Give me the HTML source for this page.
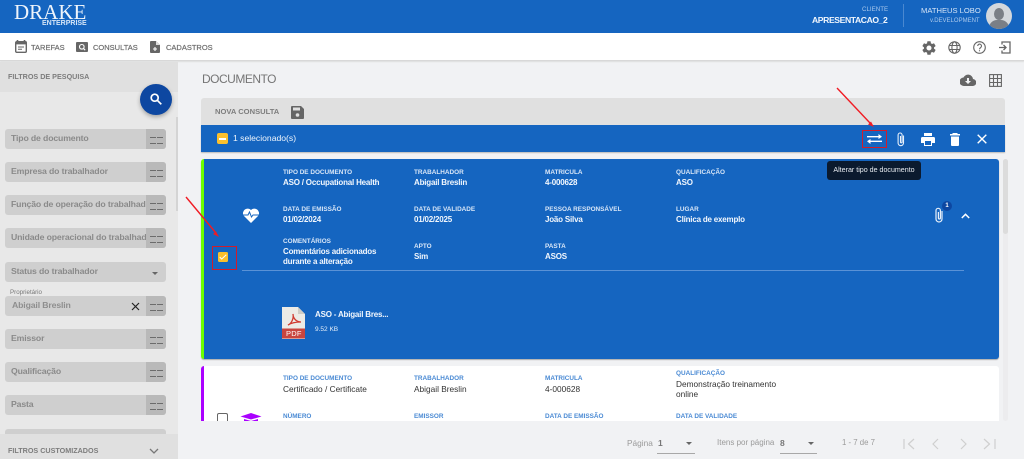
<!DOCTYPE html>
<html lang="pt"><head><meta charset="utf-8"><title>Documento</title>
<style>
*{box-sizing:border-box}
html{background:#f1f2f4}
html,body{margin:0;padding:0;width:1024px;height:459px;overflow:hidden;font-family:"Liberation Sans",sans-serif}
body{background:#f1f2f4;filter:blur(.35px)}
.a{position:absolute}
.t{position:absolute;white-space:nowrap;line-height:1}
svg{position:absolute;display:block}
.fld{position:absolute;left:5px;width:161px;height:20px;background:#cfcfcf;border-radius:3px;overflow:hidden}
.fld span{position:absolute;left:6px;top:4px;font-size:8.7px;font-weight:bold;color:#8a8a8a;white-space:nowrap;line-height:11px;letter-spacing:-.14px}
.fld i{position:absolute;right:0;top:0;width:20px;height:20px;background:#b9b9b9}
.fld i:before,.fld i:after{content:"";position:absolute;top:8px;width:5.5px;height:4.5px;border-top:1.5px solid #6c6c6c;border-bottom:1.5px solid #6c6c6c}
.fld i:before{left:4px}.fld i:after{left:11px}
.l{position:absolute;font-size:6.4px;font-weight:bold;color:#d8e6f7;white-space:nowrap;line-height:8px}
.v{position:absolute;font-size:8px;font-weight:bold;letter-spacing:-.2px;color:#f2f7fd;white-space:nowrap;line-height:10px}
.l2{position:absolute;font-size:6.4px;font-weight:bold;color:#4a8ad4;white-space:nowrap;line-height:8px}
.v2{position:absolute;font-size:8.3px;color:#333;white-space:nowrap;line-height:10px}
.nav{position:absolute;font-size:7.5px;color:#6e6e6e;white-space:nowrap;line-height:10px;top:43px;-webkit-text-stroke:.2px #6e6e6e}
</style></head><body>

<!-- header -->
<div class="a" style="left:0;top:0;width:1024px;height:33px;background:#1565c0"></div>
<div class="t" style="left:14px;top:1.5px;font-family:'Liberation Serif',serif;font-size:21px;color:#eef4fb;line-height:20px">DRAKE</div>
<div class="t" style="left:42px;top:20px;font-size:7px;font-weight:bold;color:#d5e5f7;line-height:8px">ENTERPRISE</div>
<div class="t" style="left:862px;top:6px;font-size:6.2px;color:#a9c8ec;line-height:8px">CLIENTE</div>
<div class="t" style="left:812px;top:15px;font-size:8.6px;font-weight:bold;letter-spacing:-.4px;color:#f0f6fd;line-height:10px">APRESENTACAO_2</div>
<div class="a" style="left:903px;top:4px;width:1px;height:23px;background:#4a88d0"></div>
<div class="t" style="left:921px;top:6px;font-size:7.6px;color:#d5e4f6;line-height:10px">MATHEUS LOBO</div>
<div class="t" style="left:930px;top:17px;font-size:6px;color:#a9c8ec;line-height:8px">v.DEVELOPMENT</div>
<div class="a" style="left:986px;top:3px;width:26px;height:26px;border-radius:50%;background:#d4d8dc;overflow:hidden">
 <div class="a" style="left:8px;top:5px;width:10px;height:12px;border-radius:50%;background:#7a7f86"></div>
 <div class="a" style="left:3px;top:17px;width:20px;height:12px;border-radius:8px 8px 0 0;background:#7a7f86"></div>
</div>

<!-- toolbar -->
<div class="a" style="left:0;top:33px;width:1024px;height:28px;background:#fff;border-bottom:1px solid #d8d8d8;box-shadow:0 1px 1px #ddd"></div>
<svg style="left:15px;top:40px" width="12" height="13" viewBox="0 0 12 13"><path d="M2.5 0v2M9.5 0v2" stroke="#666" stroke-width="1.6"/><rect x=".7" y="1.7" width="10.6" height="10.6" rx="1" fill="none" stroke="#666" stroke-width="1.4"/><path d="M1 2h10v2.4H1zM3 6.5h6v1H3zM3 8.8h4v1H3z" fill="#666"/></svg>
<div class="nav" style="left:31px">TAREFAS</div>
<svg style="left:76px;top:42px" width="12" height="10" viewBox="0 0 12 10"><rect width="12" height="10" rx="1" fill="#666"/><circle cx="5.8" cy="4.8" r="2.3" fill="none" stroke="#fff" stroke-width="1.1"/><path d="M7.4 6.4l1.8 1.8" stroke="#fff" stroke-width="1.1"/></svg>
<div class="nav" style="left:93px">CONSULTAS</div>
<svg style="left:150px;top:41px" width="10" height="12" viewBox="0 0 10 12"><path d="M1 0h5l4 4v7a1 1 0 0 1-1 1H1a1 1 0 0 1-1-1V1a1 1 0 0 1 1-1z" fill="#666"/><path d="M6 0v4h4" fill="#ddd"/><path d="M5 6v4M3 8h4" stroke="#fff" stroke-width="1.1"/></svg>
<div class="nav" style="left:166px">CADASTROS</div>

<svg style="left:922px;top:41px" width="14" height="14" viewBox="2 2 20 20"><path fill="#666" d="M19.14 12.94c.04-.3.06-.61.06-.94s-.02-.64-.07-.94l2.03-1.58a.49.49 0 0 0 .12-.61l-1.92-3.32a.49.49 0 0 0-.59-.22l-2.39.96c-.5-.38-1.03-.7-1.62-.94l-.36-2.54a.48.48 0 0 0-.48-.41h-3.84c-.24 0-.43.17-.47.41l-.36 2.54c-.59.24-1.13.57-1.62.94l-2.39-.96a.48.48 0 0 0-.59.22L2.74 8.87c-.12.21-.08.47.12.61l2.03 1.58c-.05.3-.09.63-.09.94s.02.64.07.94l-2.03 1.58a.49.49 0 0 0-.12.61l1.92 3.32c.12.22.37.29.59.22l2.39-.96c.5.38 1.03.7 1.62.94l.36 2.54c.05.24.24.41.48.41h3.84c.24 0 .44-.17.47-.41l.36-2.54c.59-.24 1.13-.56 1.62-.94l2.39.96c.22.08.47 0 .59-.22l1.92-3.32c.12-.22.07-.47-.12-.61l-2.01-1.58zM12 15.6A3.6 3.6 0 1 1 12 8.4a3.6 3.6 0 0 1 0 7.2z"/></svg>
<svg style="left:948px;top:41px" width="13" height="13" viewBox="0 0 13 13" fill="none" stroke="#666" stroke-width="1.1"><circle cx="6.5" cy="6.5" r="5.7"/><ellipse cx="6.5" cy="6.5" rx="2.6" ry="5.7"/><path d="M1 4.5h11M1 8.5h11"/></svg>
<svg style="left:973px;top:41px" width="13" height="13" viewBox="0 0 13 13" fill="none" stroke="#666" stroke-width="1.1"><circle cx="6.5" cy="6.5" r="5.8"/><path d="M4.7 5a1.9 1.9 0 1 1 2.9 1.6c-.8.5-1.1.9-1.1 1.7M6.5 9.2v1.1"/></svg>
<svg style="left:999px;top:41px" width="12" height="13" viewBox="0 0 12 13" fill="none" stroke="#666" stroke-width="1.3"><path d="M3 3.5V1h8v11H3V9.5"/><path d="M0 6.5h6.500M4.500 4l2.500 2.500L4.500 9"/></svg>

<!-- sidebar -->
<div class="a" style="left:0;top:62px;width:178px;height:397px;background:#e8e8e8;overflow:hidden">
 <div class="a" style="left:0;top:0;width:178px;height:30px;background:#e0e0e0"></div>
 <div class="t" style="left:8px;top:10px;font-size:7.2px;font-weight:bold;color:#7d7d7d;line-height:9px">FILTROS DE PESQUISA</div>
 <div class="a" style="left:176px;top:55px;width:2px;height:94px;background:#d4d4d4"></div>
</div>
<div class="fld" style="top:129px"><span>Tipo de documento</span><i></i></div>
<div class="fld" style="top:162px"><span>Empresa do trabalhador</span><i></i></div>
<div class="fld" style="top:195px"><span>Função de operação do trabalhador</span><i></i></div>
<div class="fld" style="top:228px"><span>Unidade operacional do trabalhador</span><i></i></div>
<div class="fld" style="top:262px"><span>Status do trabalhador</span><b class="a" style="left:147px;top:10px;border:3px solid transparent;border-top:3px solid #666;border-bottom:0;width:0"></b></div>
<div class="t" style="left:10px;top:289px;font-size:6.2px;color:#777;line-height:8px">Proprietário</div>
<div class="fld" style="top:296px"><span style="left:7px;color:#8e8e8e">Abigail Breslin</span><i></i></div>
<svg style="left:131px;top:302px" width="9" height="9" viewBox="0 0 9 9"><path d="M1 1l7 7M8 1L1 8" stroke="#222" stroke-width="1.2"/></svg>
<div class="fld" style="top:329px"><span>Emissor</span><i></i></div>
<div class="fld" style="top:362px"><span>Qualificação</span><i></i></div>
<div class="fld" style="top:395px"><span>Pasta</span><i></i></div>
<div class="fld" style="top:429px"></div>
<div class="a" style="left:0;top:434px;width:178px;height:25px;background:#e0e0e0"></div>
<div class="t" style="left:8px;top:446px;font-size:7.2px;font-weight:bold;color:#7d7d7d;line-height:9px">FILTROS CUSTOMIZADOS</div>
<svg style="left:149px;top:448px" width="10" height="7" viewBox="0 0 10 7"><path d="M1 1l4 4 4-4" fill="none" stroke="#777" stroke-width="1.3"/></svg>
<div class="a" style="left:140px;top:84px;width:32px;height:31px;border-radius:50%;background:#0d47a1;box-shadow:0 2px 4px rgba(0,0,0,.3)"></div>
<svg style="left:150px;top:93px" width="12" height="12" viewBox="0 0 12 12" fill="none" stroke="#fff" stroke-width="1.7"><circle cx="4.7" cy="4.7" r="3.5"/><path d="M7.3 7.3l4 4"/></svg>

<!-- main -->
<div class="t" style="left:202px;top:72px;font-size:12px;letter-spacing:-.5px;color:#757575;line-height:14px">DOCUMENTO</div>
<svg style="left:960px;top:74px" width="16" height="13" viewBox="0 0 16 13"><path fill="#666" d="M13 5a5 5 0 0 0-9.5-1.500A4 4 0 0 0 4 12h8.500a3.300 3.300 0 0 0 .5-7z"/><path fill="#f1f2f4" d="M7 4h2v3h2L8 10 5 7h2z"/></svg>
<svg style="left:989px;top:74px" width="13" height="13" viewBox="0 0 13 13" fill="none" stroke="#666" stroke-width="1.1"><rect x=".6" y=".6" width="11.8" height="11.8"/><path d="M4.5 .6v11.8M8.5 .6v11.8M.6 4.5h11.8M.6 8.5h11.8"/></svg>

<div class="a" style="left:201px;top:98px;width:804px;height:27px;background:#e0e0e0;border-radius:3px 3px 0 0"></div>
<div class="t" style="left:215px;top:107px;font-size:7.6px;font-weight:bold;color:#7d7d7d;line-height:9px">NOVA CONSULTA</div>
<svg style="left:291px;top:106px" width="13" height="13" viewBox="0 0 13 13"><path fill="#666" d="M1 0h9l3 3v9a1 1 0 0 1-1 1H1a1 1 0 0 1-1-1V1a1 1 0 0 1 1-1z"/><rect x="2" y="1.5" width="7" height="3" fill="#e0e0e0"/><circle cx="6.5" cy="9" r="1.8" fill="#e0e0e0"/></svg>

<div class="a" style="left:201px;top:125px;width:804px;height:27px;background:#1565c0;box-shadow:0 1px 1px #bbb"></div>
<div class="a" style="left:217px;top:133px;width:11px;height:11px;background:#fbc02d;border-radius:2px"></div>
<div class="a" style="left:219px;top:138px;width:7px;height:1.5px;background:#fff"></div>
<div class="t" style="left:233px;top:133px;font-size:8.6px;color:#f0f6fd;line-height:10px">1 selecionado(s)</div>
<div class="a" style="left:862px;top:130px;width:25px;height:18px;border:1.5px solid #d01c2c"></div>
<svg style="left:867px;top:134px" width="15" height="10" viewBox="0 0 15 10" fill="#fff"><path d="M0 2h11.5V0L15 2.7 11.5 5V3.4H0zM15 6.6H3.5V5L0 7.3 3.5 10V8H15z"/></svg>
<svg style="left:896px;top:132px" width="10" height="15" viewBox="0 0 10 15" fill="none" stroke="#e8f0fa" stroke-width="1.1"><path d="M7.5 3.5v7.500a2.700 2.700 0 0 1-5.400 0V3a2 2 0 0 1 4 0v7a.8.8 0 0 1-1.600 0V4"/></svg>
<svg style="left:921px;top:133px" width="14" height="13" viewBox="0 0 14 13" fill="#fff"><path d="M3 0h8v3H3zM1.500 4h11A1.500 1.500 0 0 1 14 5.500V10h-3v3H3v-3H0V5.500A1.500 1.500 0 0 1 1.500 4z"/><rect x="4" y="8" width="6" height="4" fill="#1565c0"/></svg>
<svg style="left:950px;top:133px" width="10" height="13" viewBox="0 0 10 13" fill="#fff"><path d="M3 0h4l1 1h2v1.500H0V1h2zM1 3.500h8V12a1 1 0 0 1-1 1H2a1 1 0 0 1-1-1z"/></svg>
<svg style="left:977px;top:134px" width="10" height="10" viewBox="0 0 10 10"><path d="M.7.7l8.600 8.600M9.300.7L.7 9.300" stroke="#fff" stroke-width="1.4"/></svg>

<!-- scrollbar -->
<div class="a" style="left:1003px;top:159px;width:5px;height:262px;background:#ececee;border-radius:3px"></div>
<div class="a" style="left:1003px;top:159px;width:5px;height:75px;background:#dcdcdc;border-radius:3px"></div>

<!-- card 1 -->
<div class="a" style="left:201px;top:159px;width:798px;height:200px;background:#1565c0;border-left:3px solid #6bff00;border-radius:3px;box-shadow:0 1px 1px #aaa"></div>
<div class="l" style="left:283px;top:169px">TIPO DE DOCUMENTO</div><div class="v" style="left:283px;top:178px">ASO / Occupational Health</div>
<div class="l" style="left:414px;top:169px">TRABALHADOR</div><div class="v" style="left:414px;top:178px">Abigail Breslin</div>
<div class="l" style="left:545px;top:169px">MATRICULA</div><div class="v" style="left:545px;top:178px">4-000628</div>
<div class="l" style="left:676px;top:169px">QUALIFICAÇÃO</div><div class="v" style="left:676px;top:178px">ASO</div>
<div class="l" style="left:283px;top:206px">DATA DE EMISSÃO</div><div class="v" style="left:283px;top:215px">01/02/2024</div>
<div class="l" style="left:414px;top:206px">DATA DE VALIDADE</div><div class="v" style="left:414px;top:215px">01/02/2025</div>
<div class="l" style="left:545px;top:206px">PESSOA RESPONSÁVEL</div><div class="v" style="left:545px;top:215px">João Silva</div>
<div class="l" style="left:676px;top:206px">LUGAR</div><div class="v" style="left:676px;top:215px">Clínica de exemplo</div>
<div class="l" style="left:283px;top:238px">COMENTÁRIOS</div><div class="v" style="left:283px;top:247px">Comentários adicionados</div><div class="v" style="left:283px;top:257px">durante a alteração</div>
<div class="l" style="left:414px;top:243px">APTO</div><div class="v" style="left:414px;top:252px">Sim</div>
<div class="l" style="left:545px;top:243px">PASTA</div><div class="v" style="left:545px;top:252px">ASOS</div>
<svg style="left:242px;top:207px" width="18" height="16" viewBox="0 0 18 16"><path fill="#fff" d="M9 16L1.5 8.500A4.700 4.700 0 0 1 9 3a4.700 4.700 0 0 1 7.500 5.500z"/><path d="M0 8h6l1.500-3 2 5 1.500-2h7" fill="none" stroke="#1565c0" stroke-width="1"/></svg>
<div class="a" style="left:212px;top:246px;width:25px;height:24px;border:1.5px solid #d01c2c"></div>
<div class="a" style="left:218px;top:252px;width:10px;height:10px;background:#fbc02d;border-radius:1.5px"></div>
<svg style="left:219px;top:254px" width="8" height="6" viewBox="0 0 8 6"><path d="M.7 3l2 2L7.3.8" fill="none" stroke="#fff" stroke-width="1"/></svg>
<div class="a" style="left:242px;top:270px;width:722px;height:1px;background:#5a92d6"></div>
<svg style="left:934px;top:207px" width="10" height="16" viewBox="0 0 10 16" fill="none" stroke="#e8f0fa" stroke-width="1.2"><path d="M8 4v8a3 3 0 0 1-6 0V3.500a2.200 2.200 0 0 1 4.400 0V11a1 1 0 0 1-2 0V5"/></svg>
<div class="a" style="left:942px;top:201px;width:10px;height:10px;border-radius:50%;background:#0d47a1;color:#fff;font-size:6px;font-weight:bold;line-height:10px;text-align:center">1</div>
<svg style="left:961px;top:213px" width="9" height="6" viewBox="0 0 9 6"><path d="M.8 5l3.700-3.700L8.200 5" fill="none" stroke="#fff" stroke-width="1.5"/></svg>
<svg style="left:281px;top:307px" width="25" height="32" viewBox="0 0 25 32"><path d="M1 0h16l7 7v25H1z" fill="#ecebe6"/><path d="M17 0v7h7z" fill="#cfcdc6"/><rect x="1" y="21.5" width="23" height="10" fill="#c8453f"/><path d="M7 18c3-1 6-6 5-11 0 4 3 8 8 8-5 0-10 1-13 3z" fill="none" stroke="#d0392f" stroke-width="1.3"/></svg>
<div class="t" style="left:286px;top:330px;font-size:7.5px;color:#fff;line-height:8px;letter-spacing:.2px">PDF</div>
<div class="v" style="left:315px;top:310px">ASO - Abigail Bres...</div>
<div class="t" style="left:315px;top:326px;font-size:6.5px;color:#e6eff9;line-height:8px">9.52 KB</div>

<!-- card 2 -->
<div class="a" style="left:201px;top:366px;width:798px;height:55px;background:#fff;border-radius:3px 3px 0 0;overflow:hidden;border-left:3px solid #aa00ff"></div>
<div class="l2" style="left:283px;top:375px">TIPO DE DOCUMENTO</div><div class="v2" style="left:283px;top:384px">Certificado / Certificate</div>
<div class="l2" style="left:414px;top:375px">TRABALHADOR</div><div class="v2" style="left:414px;top:384px">Abigail Breslin</div>
<div class="l2" style="left:545px;top:375px">MATRICULA</div><div class="v2" style="left:545px;top:384px">4-000628</div>
<div class="l2" style="left:676px;top:370px">QUALIFICAÇÃO</div><div class="v2" style="left:676px;top:379px">Demonstração treinamento</div><div class="v2" style="left:676px;top:389px">online</div>
<div class="l2" style="left:283px;top:413px">NÚMERO</div>
<div class="l2" style="left:414px;top:413px">EMISSOR</div>
<div class="l2" style="left:545px;top:413px">DATA DE EMISSÃO</div>
<div class="l2" style="left:676px;top:413px">DATA DE VALIDADE</div>
<div class="a" style="left:217px;top:413px;width:11px;height:8px;border:1.2px solid #666;border-bottom:0;border-radius:2px 2px 0 0"></div>
<svg style="left:240px;top:413px" width="22" height="8" viewBox="0 0 22 8"><path d="M11 0l10.500 3.500L11 6.500.5 3.500z" fill="#aa00ff"/><path d="M4 6v2h14V6l-7 2z" fill="#aa00ff"/></svg>

<!-- pagination -->
<div class="t" style="left:627px;top:438px;font-size:8.3px;color:#9a9a9a;line-height:10px">Página</div>
<div class="t" style="left:658px;top:438px;font-size:8.5px;font-weight:bold;color:#777;line-height:10px">1</div>
<div class="a" style="left:657px;top:453px;width:38px;height:1px;background:#a8a8a8"></div>
<b class="a" style="left:686px;top:442px;border:3px solid transparent;border-top:3px solid #666;border-bottom:0;width:0"></b>
<div class="t" style="left:717px;top:438px;font-size:8px;color:#9a9a9a;line-height:10px">Itens por página</div>
<div class="t" style="left:780px;top:438px;font-size:8.5px;font-weight:bold;color:#777;line-height:10px">8</div>
<div class="a" style="left:780px;top:453px;width:37px;height:1px;background:#a8a8a8"></div>
<b class="a" style="left:808px;top:442px;border:3px solid transparent;border-top:3px solid #666;border-bottom:0;width:0"></b>
<div class="t" style="left:842px;top:438px;font-size:7.8px;color:#9a9a9a;line-height:10px">1 - 7 de 7</div>
<svg style="left:902px;top:438px" width="100" height="12" viewBox="0 0 100 12" fill="none" stroke="#cfcfcf" stroke-width="1.2"><path d="M2 1v10M12 1L6.500 6 12 11M36 1l-5 5 5 5M59 1l5 5-5 5M82 1l5.500 5L82 11M93 1v10"/></svg>

<!-- red arrows -->
<svg style="left:0;top:0" width="1024" height="459" viewBox="0 0 1024 459" fill="none"><path d="M837 88L870 123" stroke="#f01c24" stroke-width="1.4"/><path d="M874 127l-6-2.500 3-3z" fill="#f01c24"/><path d="M186 197L216 233" stroke="#f01c24" stroke-width="1.4"/><path d="M219 237l-6-3 3-2.500z" fill="#f01c24"/></svg>

<!-- tooltip -->
<div class="a" style="left:827px;top:161px;width:94px;height:19px;background:#0b1a2e;border-radius:3px;color:#e9edf2;font-size:7.1px;line-height:19px;text-align:center;white-space:nowrap">Alterar tipo de documento</div>
</body></html>
